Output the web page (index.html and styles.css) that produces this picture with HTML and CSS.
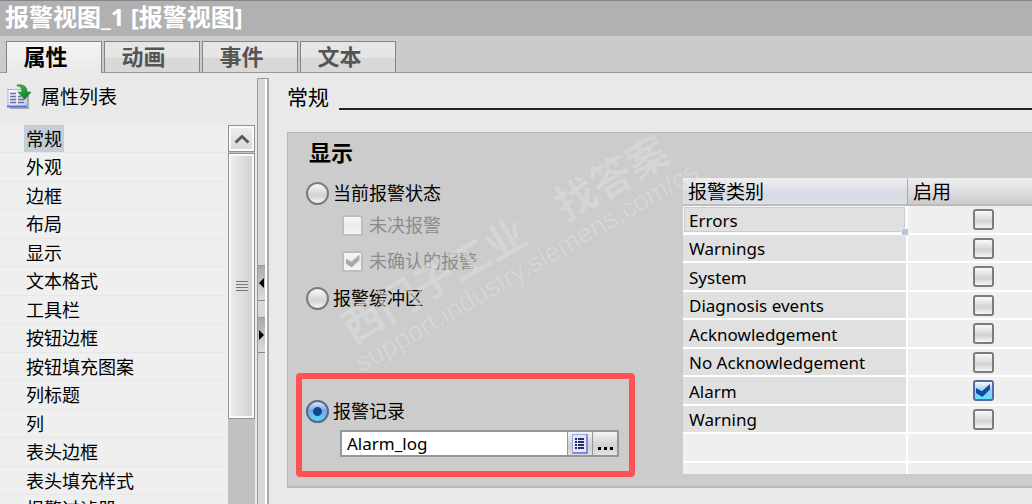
FILE: index.html
```html
<!DOCTYPE html>
<html lang="zh-CN">
<head>
  <meta charset="UTF-8"/>
  <meta name="viewport" content="width=device-width, initial-scale=1.0"/>
  <title>报警视图_1 [报警视图]</title>
  <link rel="stylesheet" href="styles.css">
</head>
<body>
<h1 class="titlebar">报警视图_1 [报警视图]</h1>
<nav class="tabs">
  <button class="tab active">属性</button>
  <button class="tab">动画</button>
  <button class="tab">事件</button>
  <button class="tab">文本</button>
</nav>
<div class="content">
  <aside class="sidebar">
    <h2 class="side-title">
      <svg width="26" height="26" viewBox="0 0 26 26">
        <defs>
          <linearGradient id="sheet" x1="0" y1="0" x2="1" y2="1"><stop offset="0" stop-color="#fff"/><stop offset="1" stop-color="#c9d0fa"/></linearGradient>
          <linearGradient id="arrow" x1="0" y1="0" x2="1" y2="1"><stop offset="0" stop-color="#46c04a"/><stop offset="1" stop-color="#0b6b1c"/></linearGradient>
        </defs>
        <path d="M3 24h18V9" fill="none" stroke="#aaa" stroke-width="2"/>
        <rect x="1" y="5.500" width="18" height="17" fill="url(#sheet)" stroke="#a3adf0"/>
        <path d="M0 22.500h20" stroke="#6070e0" stroke-width="2"/>
        <path d="M3 9.500h6M3 12.500h6M3 15.500h6M3 18.500h6M11 12.500h3M11 15.500h6M11 18.500h6" stroke="#6a7090" stroke-width="1.500"/>
        <path d="M10 1C16 0 20 2 20 8H24L17.500 15.500L11 8H15C15 4 13 2 10 2Z" fill="url(#arrow)" stroke="#17802a" stroke-width=".6"/>
      </svg>
      属性列表
    </h2>
    <div class="side-body">
      <ul class="list">
        <li><a href="#" class="selected">常规</a></li>
        <li><a href="#">外观</a></li>
        <li><a href="#">边框</a></li>
        <li><a href="#">布局</a></li>
        <li><a href="#">显示</a></li>
        <li><a href="#">文本格式</a></li>
        <li><a href="#">工具栏</a></li>
        <li><a href="#">按钮边框</a></li>
        <li><a href="#">按钮填充图案</a></li>
        <li><a href="#">列标题</a></li>
        <li><a href="#">列</a></li>
        <li><a href="#">表头边框</a></li>
        <li><a href="#">表头填充样式</a></li>
        <li><a href="#">报警过滤器</a></li>
      </ul>
      <div class="scrollbar">
        <button class="scroll-up" aria-label="向上滚动">
          <svg width="16" height="10" viewBox="0 0 16 10"><path d="M1.500 8.500L8 2.500L14.500 8.500" fill="none" stroke="#5a5a5a" stroke-width="3"/></svg>
        </button>
        <div class="thumb"><span class="grip"></span></div>
      </div>
    </div>
  </aside>
  <div class="splitter">
    <button class="collapse" aria-label="折叠"><svg width="5" height="10" viewBox="0 0 5 10"><path d="M5 0V10L0 5Z"/></svg></button>
    <button class="collapse" aria-label="展开"><svg width="5" height="10" viewBox="0 0 5 10"><path d="M0 0V10L5 5Z"/></svg></button>
  </div>
  <main class="main">
    <h2 class="section-title">常规</h2>
    <section class="panel">
      <div class="form">
        <h3>显示</h3>
        <div class="option"><input type="radio" name="source" id="state"><label for="state">当前报警状态</label></div>
        <div class="option sub"><input type="checkbox" id="pending" disabled><label for="pending">未决报警</label></div>
        <div class="option sub second"><input type="checkbox" id="unack" checked disabled><label for="unack">未确认的报警</label></div>
        <div class="option buffer"><input type="radio" name="source" id="buffer"><label for="buffer">报警缓冲区</label></div>
        <div class="marked">
          <div class="option"><input type="radio" name="source" id="log" checked><label for="log">报警记录</label></div>
          <div class="picker">
            <input type="text" value="Alarm_log" aria-label="报警记录">
            <button aria-label="选择">
              <svg width="16" height="20" viewBox="0 0 16 20">
                <rect x=".5" y=".5" width="15" height="19" fill="#e4e8ff" stroke="#98a4e6"/>
                <path d="M1 19h14V1" fill="none" stroke="#7d8be0" stroke-width="2"/>
                <path d="M3 5h2M3 8h2M3 11h2M3 14h2M6 5h6M6 8h6M6 11h6M6 14h6" stroke="#26305f" stroke-width="2"/>
              </svg>
            </button>
            <button aria-label="浏览">
              <svg width="18" height="20" viewBox="0 0 18 20"><path d="M2 13h3v3H2zM8 13h3v3H8zM14 13h3v3H14z"/></svg>
            </button>
          </div>
        </div>
      </div>
      <div class="classes">
        <table>
          <thead>
            <tr><th>报警类别</th><th>启用</th></tr>
          </thead>
          <tbody>
            <tr><td class="focused"><label for="c1">Errors</label></td><td><input type="checkbox" id="c1"></td></tr>
            <tr><td><label for="c2">Warnings</label></td><td><input type="checkbox" id="c2"></td></tr>
            <tr><td><label for="c3">System</label></td><td><input type="checkbox" id="c3"></td></tr>
            <tr><td><label for="c4">Diagnosis events</label></td><td><input type="checkbox" id="c4"></td></tr>
            <tr><td><label for="c5">Acknowledgement</label></td><td><input type="checkbox" id="c5"></td></tr>
            <tr><td><label for="c6">No Acknowledgement</label></td><td><input type="checkbox" id="c6"></td></tr>
            <tr><td><label for="c7">Alarm</label></td><td><input type="checkbox" id="c7" checked></td></tr>
            <tr><td><label for="c8">Warning</label></td><td><input type="checkbox" id="c8"></td></tr>
            <tr class="empty"><td></td><td></td></tr>
            <tr class="empty last"><td></td><td></td></tr>
          </tbody>
        </table>
      </div>
      <div class="watermark">
        <p class="wm-name">西门子工业　找答案</p>
        <p class="wm-url">support.industry.siemens.com/cs</p>
      </div>
    </section>
  </main>
</div>
</body>
</html>
```

FILE: styles.css
```css
:root{
  --line: #969696;
  --face: #e9e9e9;
}
*{box-sizing: border-box;}
html{height: 100%;}
body {
  margin: 0;
  height: 100%;
  display: flex;
  flex-direction: column;
  overflow: hidden;
  color: black;
  background-color: var(--face);
  font-family: "Noto Sans", "Noto Sans CJK SC", sans-serif;
  font-size: 18px;
  line-height: 24px;
}
h1, h2, h3, p, ul{
  margin: 0;
  padding: 0;
  font-weight: normal;
}
button, input{
  margin: 0;
  padding: 0;
  font-family: inherit;
}
svg{display: block;}

.titlebar{
  flex: none;
  height: 36px;
  padding: 0 5px;
  border-top: 1px solid #85858a;
  background-color: #b1b1b1;
  color: white;
  font-size: 24px;
  font-weight: bold;
  line-height: 32px;
}
.tabs{
  flex: none;
  display: flex;
  gap: 2px;
  height: 37px;
  padding: 5px 6px 0;
  background-color: #cbcbcb;
  box-shadow: inset 0 -1px var(--line);
}
.tab{
  width: 96px;
  padding: 0 17px 3px 0;
  border: 1px solid #858585;
  border-bottom-color: var(--line);
  background: linear-gradient(#e6e6e6 50%, #d8d8d8 55%);
  color: #555;
  font-size: 22px;
  font-weight: bold;
  line-height: 26px;
}
.tab.active{
  color: black;
  background: linear-gradient(#f4f4f4, var(--face));
  border-bottom: 0;
}

.content{
  flex: 1;
  min-height: 0;
  display: flex;
}
.sidebar{
  flex: none;
  width: 257px;
  display: flex;
  flex-direction: column;
}
.side-title{
  flex: none;
  display: flex;
  align-items: center;
  gap: 8px;
  height: 52px;
  padding: 0 7px 4px;
  font-size: 19px;
}
.side-body{
  flex: 1;
  min-height: 0;
  display: flex;
}
.list{
  flex: 1;
  display: grid;
  grid-template-rows: repeat(7, 28px 29px);
  overflow: hidden;
  list-style: none;
  background-color: #efefef;
}
.list li{
  padding-left: 24px;
  border-bottom: 1px solid #e6e6e6;
}
.list a{
  display: inline-block;
  height: 27px;
  padding: 0 2px;
  color: black;
  line-height: 28px;
  text-decoration: none;
}
.list .selected{background-color: #c3cdd8;}

.scrollbar{
  display: flex;
  flex-direction: column;
  gap: 1px;
  width: 29px;
  padding-right: 2px;
  background: linear-gradient(to right, #c1c1c1 27px, var(--face) 27px);
}
.scroll-up, .thumb{
  display: grid;
  place-items: center;
  border: 1px solid #929292;
  box-shadow: inset 0 0 0 2px #fafafa;
}
.scroll-up{
  height: 27px;
  background: linear-gradient(#eee, #d8d8d8);
}
.thumb{
  height: 266px;
  background: linear-gradient(to right, #ececec, #d0d0d0);
}
.grip{
  width: 12px;
  height: 11px;
  background: repeating-linear-gradient(#777 0 1px, #e0e0e0 1px 3px);
}
.splitter{
  flex: none;
  display: flex;
  flex-direction: column;
  gap: 16px;
  width: 12px;
  margin-top: 5px;
  padding-top: 186px;
  border: 1px solid #999;
  border-right: 2px solid #aaa;
  border-bottom: 0;
  background: linear-gradient(to right, #d8d8d8 7px, white 7px);
}
.collapse{
  display: grid;
  place-items: center;
  width: 7px;
  height: 36px;
  border: 0;
  border-top: 1px solid #999;
  border-bottom: 1px solid #888;
  background: linear-gradient(#aaa, #ddd);
}

.main{
  flex: 1;
  min-width: 0;
  padding-left: 18px;
}
.section-title{
  display: flex;
  gap: 10px;
  height: 59px;
  padding-top: 9px;
  font-size: 21px;
  line-height: 30px;
}
.section-title::after{
  content: "";
  flex: 1;
  height: 26px;
  border-bottom: 2px solid #222;
}
.panel{
  position: relative;
  display: grid;
  grid-template-columns: 395px 1fr;
  height: 356px;
  border: 1px solid #b8b8b8;
  border-width: 1px 0 2px 1px;
  background-color: #ccc;
}
.form{padding-top: 4px;}
.form h3{
  padding-left: 21px;
  margin-bottom: 14px;
  font-size: 22px;
  font-weight: bold;
  line-height: 30px;
}
.option{
  display: flex;
  align-items: center;
  gap: 4px;
  height: 24px;
  padding-left: 18px;
}
.option.sub{
  gap: 6px;
  padding-left: 54px;
  margin-top: 8px;
  color: #8c8c8c;
}
.option.second{margin-top: 12px;}
.option.buffer{margin-top: 13px;}

input[type=radio], input[type=checkbox]{
  appearance: none;
  display: grid;
  place-items: center;
  flex: none;
  border: 2px solid #7c7c7c;
  background: linear-gradient(#fafafa, #d2d2d2 60%, #f6f6f6);
}
input[type=radio]{
  width: 23px;
  height: 23px;
  border-radius: 50%;
}
input[type=checkbox]{
  width: 21px;
  height: 21px;
  border-radius: 3px;
}
input[type=radio]:checked{
  border-color: #55698a;
  background: radial-gradient(circle, #0a4a96 0 4px, transparent 5px),
              linear-gradient(#dfe8fb, #7ca4e4 45%, #5cdcf4);
}
input[type=checkbox]:checked{
  border-color: #4f6da6;
  background: linear-gradient(#f4f8ff, #a3c6ee 50%, #5ae6fa);
}
input[type=checkbox]::before{
  content: "";
  width: 14px;
  height: 13px;
  clip-path: polygon(0 30%, 42% 55%, 100% 0, 100% 42%, 45% 100%, 0 70%);
}
input[type=checkbox]:checked::before{background-color: #0b4ca0;}
input[type=checkbox]:disabled{
  border-color: #bdbdbd;
  background: linear-gradient(#f6f6f6, #ebebeb 50%, #f6f6f6);
}
input[type=checkbox]:disabled:checked::before{background-color: #aaa;}

.marked{
  width: 339px;
  margin: 63px 0 0 8px;
  padding: 20px 10px 14px 4px;
  border: 6px solid #ff5252;
  border-radius: 4px;
}
.marked .option{padding-left: 0;}
.picker{
  display: flex;
  height: 27px;
  margin: 7px 0 0 34px;
  border: 2px solid #969696;
  background-color: #969696;
}
.picker input{
  flex: 1;
  min-width: 0;
  padding-left: 5px;
  border: 0;
  background-color: white;
  font-size: 17px;
}
.picker button{
  display: grid;
  place-items: center;
  width: 24px;
  margin-left: 1px;
  border: 0;
  background: linear-gradient(#f4f4f4, #cfcfcf 60%, #e2e2e2);
}

.classes{
  padding-top: 45px;
  overflow: hidden;
}
table{
  width: calc(100% + 26px);
  table-layout: fixed;
  border-collapse: separate;
  border-spacing: 0;
}
th{
  height: 28px;
  padding: 0 5px;
  border-top: 1px solid #eee;
  border-bottom: 2px solid #bbb;
  background: linear-gradient(#eee, #ccc);
  font-size: 19px;
  font-weight: normal;
  line-height: 24px;
  text-align: left;
}
th:first-child{
  width: 225px;
  border-right: 1px solid #aaa;
  background: linear-gradient(#eee, #d5dae2 60%, #dce1e9);
}
td{
  height: 28px;
  padding: 0;
  border-bottom: 2px solid white;
  background-color: #efefef;
  font-size: 17px;
}
tr:nth-child(odd) td{height: 29px;}
td:first-child{
  padding-left: 6px;
  border-right: 2px solid white;
  background-color: #e0e0e0;
}
td label{
  display: block;
  padding-top: 2px;
}
td input[type=checkbox]{margin: 0 auto;}
td.focused{
  position: relative;
  box-shadow: inset 0 0 0 1px #fafafa, inset 0 0 0 2px #c3cdd8;
}
td.focused::after{
  content: "";
  position: absolute;
  right: -3px;
  bottom: -3px;
  width: 6px;
  height: 6px;
  border: 1px solid #eee;
  background-color: #b9c6d6;
}
.empty td:first-child{background-color: #efefef;}
tr.last td{
  height: 11px;
  border-bottom: 0;
}

/* text laid diagonally over the panel */
.watermark{
  position: absolute;
  left: 32px;
  top: 79px;
  transform: rotate(-30deg);
  color: rgba(238, 238, 238, 0.5);
  text-shadow: 0 0 1px rgba(130, 130, 130, 0.2);
  white-space: nowrap;
  pointer-events: none;
}
.wm-name{
  padding-left: 6px;
  font-size: 41px;
  font-weight: bold;
  line-height: 44px;
}
.wm-url{
  font-family: "Liberation Sans", sans-serif;
  font-size: 27px;
  line-height: 28px;
}
```
